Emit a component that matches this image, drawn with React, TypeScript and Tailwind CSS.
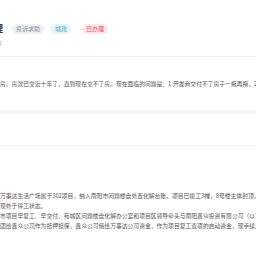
export default function App() {
  const body = [
    '万事达生活广场属于302项目，纳入南阳市问题楼盘处置化解台账。项目已竣工3幢，8号楼主体封顶，其余楼栋',
    '现处于停工状态。',
    '市项目早复工、早交付，宛城区问题楼盘化解办公室和项目区领导牵头与南阳鑫众投资有限公司（以下简称',
    '团给鑫众公司作为抵押担保，鑫众公司借给万事达公司资金，作为项目复工查项的启动资金，现手续正在办理',
  ]

  return (
    <div
      className="w-[256px] h-[256px] overflow-hidden bg-white"
      style={{ fontFamily: '"Noto Sans CJK SC", "Liberation Sans", sans-serif' }}
    >
      {/* Header */}
      <div className="pt-[23px] pb-[8px]">
        <div className="flex items-center h-[11px]">
          <span className="-ml-[6px] text-[9px] leading-none font-bold text-[#333]">理</span>
          <span className="ml-[9px] h-[10px] px-[4px] rounded-full bg-[#eef1f6] text-[#8b93a3] text-[6px] leading-[10px] whitespace-nowrap">投诉求助</span>
          <span className="ml-[7px] h-[10px] px-[4px] rounded-full bg-[#e4f5fa] text-[#4fa9c2] text-[6px] leading-[10px] whitespace-nowrap">城建</span>
          <span className="ml-[11px] h-[10px] px-[4px] rounded-full bg-[#fde6e8] text-[#e2555f] text-[6px] leading-[10px] whitespace-nowrap">已办理</span>
        </div>
        <div className="mt-[6px] -ml-[2px] text-[6px] leading-[8px] text-[#aaa]">8</div>
      </div>
      <div className="h-px bg-[#efefef]" />

      {/* Question */}
      <div className="pt-[23px] pb-[22px]">
        <p className="text-[5.8px] leading-[8px] text-[#555] whitespace-nowrap">
          房，房款已交近十年了，直到现在交不了房。现在面临的问题是：1.开发商交付不了房子一拖再拖，2.
        </p>
      </div>
      <div className="h-[4px] bg-[#f6f6f6]" />

      {/* Reply */}
      <div className="h-[31px]" />
      <div className="h-px bg-[#f2f2f2]" />
      <div className="pt-[45px] flex flex-col">
        {body.map((line, i) => (
          <p key={i} className="text-[5.8px] leading-[10px] text-[#555] whitespace-nowrap">
            {line}
          </p>
        ))}
      </div>
    </div>
  )
}
